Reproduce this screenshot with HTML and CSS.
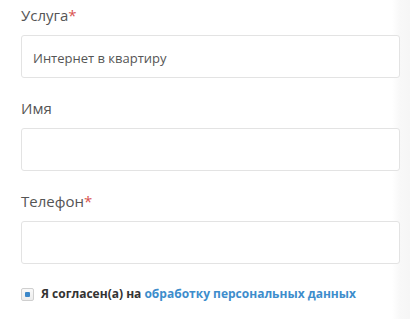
FILE: index.html
```html
<!DOCTYPE html>
<html>
<head>
  <meta charset="utf-8">
  <title>Заявка</title>
  <link rel="stylesheet" href="styles.css">
</head>
<body>
  <form class="order-form">
    <div class="field">
      <label for="service">Услуга<span class="req">*</span></label>
      <input type="text" id="service" value="Интернет в квартиру">
    </div>

    <div class="field">
      <label for="name">Имя</label>
      <input type="text" id="name">
    </div>

    <div class="field">
      <label for="phone">Телефон<span class="req">*</span></label>
      <input type="text" id="phone">
    </div>

    <label class="agree">
      <span class="check"><span class="check-dot"></span></span>
      <span class="agree-text">Я согласен(а) на <a href="#">обработку персональных данных</a></span>
    </label>
  </form>
</body>
</html>
```

FILE: styles.css
```css
* { box-sizing: border-box; }

body {
  margin: 0;
  font-family: 'Open Sans', Arial, sans-serif;
  color: #555;
  background: linear-gradient(to right, #fff 0, #fff 392px, #f8f8f8 400px, #f6f6f6 410px);
  min-height: 319px;
}

.order-form {
  width: 400px;
  padding: 5px 0 0 21px;
}

.field {
  margin-bottom: 20px;
}

.field label {
  display: block;
  font-size: 15px;
  line-height: 20px;
  margin-bottom: 10px;
  color: #555;
}

.req {
  color: #d9534f;
}

input[type="text"] {
  display: block;
  width: 379px;
  height: 43px;
  padding: 3px 11px 0 11px;
  border: 1px solid #e3e3e3;
  border-radius: 3px;
  background: #fff;
  font-family: 'Open Sans', Arial, sans-serif;
  font-size: 13px;
  color: #555;
}

input[type="text"]:focus {
  outline: none;
  border-color: #c8c8c8;
}

.agree {
  display: flex;
  align-items: center;
  margin-top: 22px;
  font-size: 12px;
  line-height: 16px;
  font-weight: 700;
  color: #333;
  white-space: nowrap;
}

.check {
  display: flex;
  align-items: center;
  justify-content: center;
  flex: none;
  width: 13px;
  height: 13px;
  margin-right: 7px;
  border: 1px solid #cfcfcf;
  border-radius: 2px;
  background: linear-gradient(#f9f9f9, #ececec);
}

.check-dot {
  width: 5px;
  height: 5px;
  border-radius: 1px;
  background: #3b87c9;
}

.agree a {
  color: #3d8dcc;
  text-decoration: none;
}
```
